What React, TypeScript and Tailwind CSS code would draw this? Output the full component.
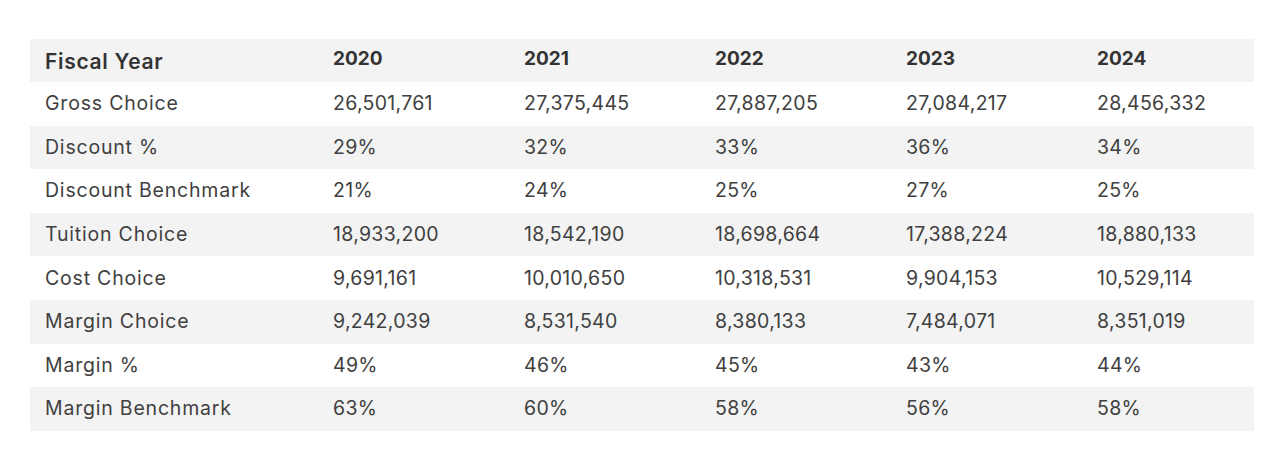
import React from "react";

const years = ["2020", "2021", "2022", "2023", "2024"];

const rows: { label: string; values: string[] }[] = [
  { label: "Gross Choice", values: ["26,501,761", "27,375,445", "27,887,205", "27,084,217", "28,456,332"] },
  { label: "Discount %", values: ["29%", "32%", "33%", "36%", "34%"] },
  { label: "Discount Benchmark", values: ["21%", "24%", "25%", "27%", "25%"] },
  { label: "Tuition Choice", values: ["18,933,200", "18,542,190", "18,698,664", "17,388,224", "18,880,133"] },
  { label: "Cost Choice", values: ["9,691,161", "10,010,650", "10,318,531", "9,904,153", "10,529,114"] },
  { label: "Margin Choice", values: ["9,242,039", "8,531,540", "8,380,133", "7,484,071", "8,351,019"] },
  { label: "Margin %", values: ["49%", "46%", "45%", "43%", "44%"] },
  { label: "Margin Benchmark", values: ["63%", "60%", "58%", "56%", "58%"] },
];

const gridCols = "grid grid-cols-[288px_191px_191px_191px_191px_1fr] px-[15px]";

export default function App() {
  return (
    <div className="bg-white w-[1287px] h-[471px] pt-[39px] pl-[30px] font-['Inter',sans-serif] text-[#404040]">
      <div className="w-[1224px]">
        {/* Header */}
        <div className={`${gridCols} h-[43px] bg-[#f3f3f3] items-center`}>
          <div className="text-[21px] font-semibold text-[#333] tracking-[0.7px] pt-[2px]">Fiscal Year</div>
          {years.map((y) => (
            <div key={y} className="text-[19px] font-bold text-[#333] pb-[3px]">
              {y}
            </div>
          ))}
        </div>

        {rows.map((r, i) => (
          <div
            key={r.label}
            className={`${gridCols} h-[43.6px] items-center text-[19.5px] ${i % 2 === 1 ? "bg-[#f3f3f3]" : "bg-white"}`}
          >
            <div className="tracking-[0.8px]">{r.label}</div>
            {r.values.map((v, j) => (
              <div key={j} className="tracking-[0.3px]">{v}</div>
            ))}
          </div>
        ))}
      </div>
    </div>
  );
}
